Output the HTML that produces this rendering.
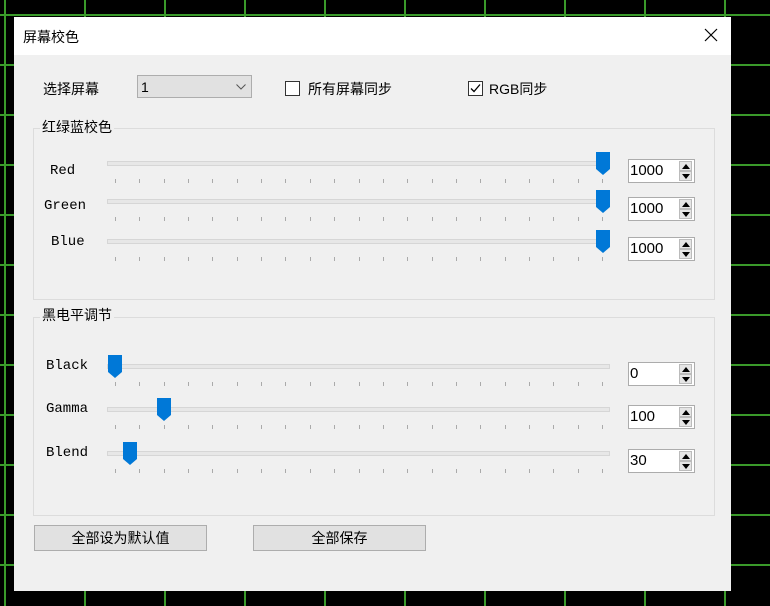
<!DOCTYPE html><html><head><meta charset="utf-8"><style>
body{margin:0;width:770px;height:606px;background:#000;position:relative;overflow:hidden;font-family:"Liberation Sans","Noto Sans CJK SC",sans-serif;font-size:14px;color:#000}
.a{position:absolute}
.grid{position:absolute;inset:0;background-image:linear-gradient(to right,#3a9a2a 2px,transparent 2px),linear-gradient(to bottom,#3a9a2a 2px,transparent 2px);background-size:80px 50px;background-position:4px 14px}
.dlg{position:absolute;left:14px;top:17px;width:717px;height:574px;background:#f0f0f0}
.title{position:absolute;left:0;top:0;width:717px;height:38px;background:#fff}
.grp{position:absolute;border:1px solid #dcdcdc}
.gt{position:absolute;background:#f0f0f0;padding:0 2px}
.track{position:absolute;height:3px;background:#e7e7e7;border:1px solid #d6d6d6}
.tick{position:absolute;width:1px;height:4px;background:#aaa}
.spin{position:absolute;width:67px;height:24px;background:#fff;border:1px solid #acacac;font-family:"Liberation Sans",sans-serif;font-size:15px;line-height:22px;padding-left:1px;box-sizing:border-box}
.ar{position:absolute;right:2px;width:13px;height:10px;background:#e5e5e5;border:1px solid #bbb;box-sizing:border-box}
.btn{position:absolute;height:26px;background:#e1e1e1;border:1px solid #adadad;box-sizing:border-box;text-align:center;line-height:24px}
.lbl{position:absolute;font-family:"Liberation Mono",monospace;font-size:14px}
</style></head><body>
<div class="grid"></div>
<div class="dlg">
<div class="title"><span class="a" style="left:9px;top:10px">屏幕校色</span>
<svg class="a" style="left:690px;top:11px" width="14" height="14"><path d="M1 1L13 13M13 1L1 13" stroke="#000" stroke-width="1.2"/></svg></div>
</div>
<span class="a" style="left:43px;top:79px">选择屏幕</span>
<div class="a" style="left:137px;top:75px;width:115px;height:23px;background:#e1e1e1;border:1px solid #adadad;box-sizing:border-box"><span class="a" style="left:3px;top:3px">1</span>
<svg class="a" style="left:98px;top:8px" width="10" height="6"><path d="M0.5 0.5L5 5L9.5 0.5" stroke="#555" fill="none"/></svg></div>
<div class="a" style="left:285px;top:81px;width:15px;height:15px;background:#fff;border:1px solid #333;box-sizing:border-box"></div>
<span class="a" style="left:308px;top:79px">所有屏幕同步</span>
<div class="a" style="left:468px;top:81px;width:15px;height:15px;background:#fff;border:1px solid #333;box-sizing:border-box"><svg width="13" height="13"><path d="M2 6.5L5 9.5L11 2.5" stroke="#000" fill="none" stroke-width="1.3"/></svg></div>
<span class="a" style="left:489px;top:79px">RGB同步</span>

<div class="grp" style="left:33px;top:128px;width:680px;height:170px"></div>
<span class="gt a" style="left:40px;top:117px">红绿蓝校色</span>
<div class="grp" style="left:33px;top:317px;width:680px;height:197px"></div>
<span class="gt a" style="left:40px;top:305px">黑电平调节</span>

<span class="lbl" style="left:50px;top:163px">Red</span>
<span class="lbl" style="left:44px;top:198px">Green</span>
<span class="lbl" style="left:51px;top:234px">Blue</span>
<span class="lbl" style="left:46px;top:358px">Black</span>
<span class="lbl" style="left:46px;top:401px">Gamma</span>
<span class="lbl" style="left:46px;top:445px">Blend</span>

<div id="sl"></div>

<div class="btn" style="left:34px;top:525px;width:173px">全部设为默认值</div>
<div class="btn" style="left:253px;top:525px;width:173px">全部保存</div>
<script>
var rows=[[161,603,1000],[199,603,1000],[239,603,1000],[364,115,0],[407,164,100],[451,130,30]];
var h='';
rows.forEach(function(r){var y=r[0];
h+='<div class="track" style="left:107px;top:'+y+'px;width:501px"></div>';
for(var i=0;i<21;i++){h+='<div class="tick" style="left:'+Math.round(115+i*24.35)+'px;top:'+(y+18)+'px"></div>';}
h+='<svg class="a" style="left:'+(r[1]-7)+'px;top:'+(y-9)+'px" width="14" height="24"><path d="M0 0H14V17L7 23L0 17Z" fill="#0078d7"/></svg>';
h+='<div class="spin" style="left:628px;top:'+(y-2)+'px">'+r[2]+'<div class="ar" style="top:1px"><svg class="a" style="left:2px;top:2px" width="8" height="5"><path d="M4 0L8 5H0Z"/></svg></div><div class="ar" style="top:11px"><svg class="a" style="left:2px;top:2px" width="8" height="5"><path d="M0 0H8L4 5Z"/></svg></div></div>';
});
document.getElementById('sl').innerHTML=h;
</script>
</body></html>
